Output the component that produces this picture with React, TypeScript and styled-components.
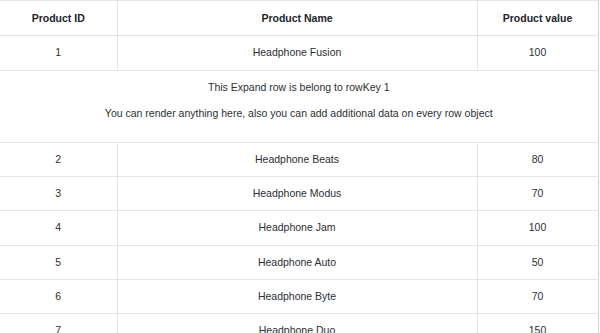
import React from "react";
import styled, { createGlobalStyle } from "styled-components";

const GlobalStyle = createGlobalStyle`
  html, body {
    margin: 0;
    padding: 0;
    background: #ffffff;
    overflow: hidden;
  }
  body {
    font-family: "Liberation Sans", Arial, Helvetica, sans-serif;
    color: #212529;
  }
`;

const Wrapper = styled.div`
  width: 598px;
`;

const Table = styled.table`
  width: 100%;
  border-collapse: collapse;
  table-layout: fixed;
  font-size: 10.5px;
  line-height: 15.3px;
  border-top: 1px solid #e3e6ea;
  border-right: 1.5px solid #cfd2d6;
`;

const Col = styled.col<{ $w: number }>`
  width: ${(p) => p.$w}px;
`;

const HeadCell = styled.th<{ $last?: boolean }>`
  padding: 9.5px 6px;
  text-align: center;
  font-weight: 700;
  color: #212529;
  border-bottom: 1.5px solid #dee2e6;
  border-right: ${(p) => (p.$last ? "none" : "0.75px solid #e3e6ea")};
`;

const Row = styled.tr`
  border-bottom: 0.75px solid #e3e6ea;
`;

const Cell = styled.td<{ $last?: boolean }>`
  padding: 9px 6px;
  text-align: center;
  color: #2b2f33;
  border-right: ${(p) => (p.$last ? "none" : "0.75px solid #e3e6ea")};
`;

const ExpandCell = styled.td`
  padding: 9px 6px 8.5px;
  text-align: center;
  color: #2b2f33;
`;

const ExpandText = styled.p`
  margin: 0 0 11.5px 0;
  &:last-child {
    margin-bottom: 0;
  }
`;

type Product = { id: number; name: string; value: number };

const products: Product[] = [
  { id: 1, name: "Headphone Fusion", value: 100 },
  { id: 2, name: "Headphone Beats", value: 80 },
  { id: 3, name: "Headphone Modus", value: 70 },
  { id: 4, name: "Headphone Jam", value: 100 },
  { id: 5, name: "Headphone Auto", value: 50 },
  { id: 6, name: "Headphone Byte", value: 70 },
  { id: 7, name: "Headphone Duo", value: 150 },
];

export default function App() {
  return (
    <Wrapper>
      <GlobalStyle />
      <Table>
        <colgroup>
          <Col $w={117} />
          <Col $w={360} />
          <Col $w={121} />
        </colgroup>
        <thead>
          <tr>
            <HeadCell>Product ID</HeadCell>
            <HeadCell>Product Name</HeadCell>
            <HeadCell $last>Product value</HeadCell>
          </tr>
        </thead>
        <tbody>
          {products.map((p) => (
            <React.Fragment key={p.id}>
              <Row>
                <Cell>{p.id}</Cell>
                <Cell>{p.name}</Cell>
                <Cell $last>{p.value}</Cell>
              </Row>
              {p.id === 1 && (
                <Row>
                  <ExpandCell colSpan={3}>
                    <ExpandText>This Expand row is belong to rowKey 1</ExpandText>
                    <ExpandText>
                      You can render anything here, also you can add additional data on every row object
                    </ExpandText>
                    <ExpandText />
                  </ExpandCell>
                </Row>
              )}
            </React.Fragment>
          ))}
        </tbody>
      </Table>
    </Wrapper>
  );
}
